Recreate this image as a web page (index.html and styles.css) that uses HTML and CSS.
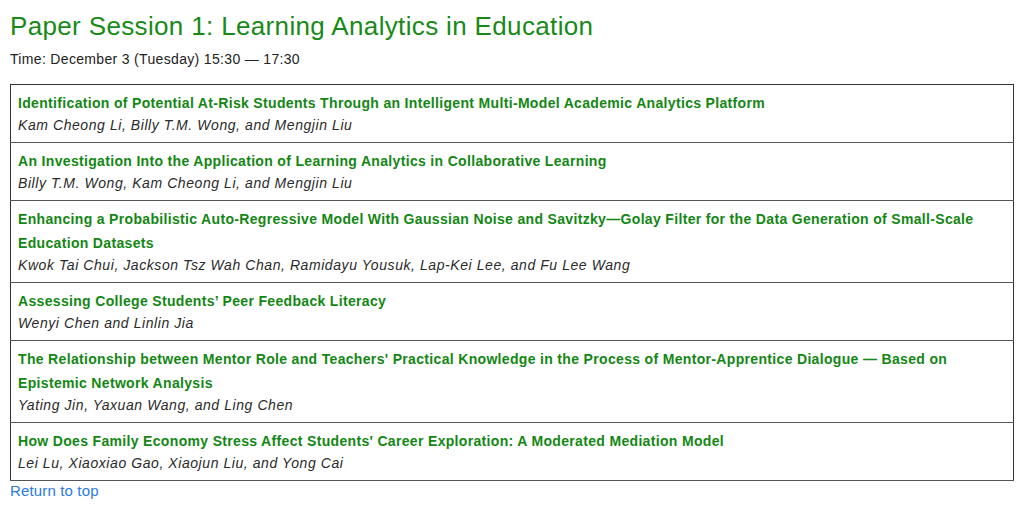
FILE: index.html
```html
<!DOCTYPE html>
<html lang="en">
<head>
<meta charset="utf-8">
<title>Paper Session 1</title>
<link rel="stylesheet" href="styles.css">
</head>
<body>
<main class="page">
  <h2 class="session-title">Paper Session 1: Learning Analytics in Education</h2>
  <p class="session-time">Time: December 3 (Tuesday) 15:30 — 17:30</p>
  <table class="papers">
    <tbody>
      <tr><td>
        <div class="paper-title">Identification of Potential At-Risk Students Through an Intelligent Multi-Model Academic Analytics Platform</div>
        <div class="paper-authors">Kam Cheong Li, Billy T.M. Wong, and Mengjin Liu</div>
      </td></tr>
      <tr><td>
        <div class="paper-title">An Investigation Into the Application of Learning Analytics in Collaborative Learning</div>
        <div class="paper-authors">Billy T.M. Wong, Kam Cheong Li, and Mengjin Liu</div>
      </td></tr>
      <tr><td>
        <div class="paper-title">Enhancing a Probabilistic Auto-Regressive Model With Gaussian Noise and Savitzky—Golay Filter for the Data Generation of Small-Scale Education Datasets</div>
        <div class="paper-authors">Kwok Tai Chui, Jackson Tsz Wah Chan, Ramidayu Yousuk, Lap-Kei Lee, and Fu Lee Wang</div>
      </td></tr>
      <tr><td>
        <div class="paper-title">Assessing College Students’ Peer Feedback Literacy</div>
        <div class="paper-authors">Wenyi Chen and Linlin Jia</div>
      </td></tr>
      <tr><td>
        <div class="paper-title">The Relationship between Mentor Role and Teachers' Practical Knowledge in the Process of Mentor-Apprentice Dialogue — Based on Epistemic Network Analysis</div>
        <div class="paper-authors">Yating Jin, Yaxuan Wang, and Ling Chen</div>
      </td></tr>
      <tr><td>
        <div class="paper-title">How Does Family Economy Stress Affect Students' Career Exploration: A Moderated Mediation Model</div>
        <div class="paper-authors">Lei Lu, Xiaoxiao Gao, Xiaojun Liu, and Yong Cai</div>
      </td></tr>
    </tbody>
  </table>
  <a class="top-link" href="#">Return to top</a>
</main>
</body>
</html>
```

FILE: styles.css
```css
html, body {
  margin: 0;
  padding: 0;
  background: #ffffff;
}

.page {
  padding: 10px 10px 0 10px;
  font-family: "Liberation Sans", Arial, sans-serif;
  color: #222222;
}

.session-title {
  margin: 0;
  font-size: 26px;
  line-height: 32px;
  font-weight: normal;
  letter-spacing: 0.35px;
  color: #178a17;
}

.session-time {
  margin: 8px 0 16px 0;
  font-size: 14px;
  line-height: 18px;
  letter-spacing: 0.33px;
  color: #222222;
}

.papers {
  width: 100%;
  border-collapse: collapse;
  border: 1px solid #333333;
}

.papers td {
  border-bottom: 1px solid #555555;
  padding: 6px 8px 7px 7px;
  vertical-align: top;
}

.paper-title {
  font-size: 14px;
  line-height: 24px;
  font-weight: bold;
  letter-spacing: 0.33px;
  color: #138713;
}

.paper-authors {
  font-size: 14px;
  line-height: 20px;
  font-style: italic;
  letter-spacing: 0.57px;
  color: #2a2a2a;
}

.top-link {
  display: inline-block;
  margin-top: 1px;
  font-size: 15px;
  line-height: 18px;
  letter-spacing: 0.15px;
  color: #2a7ae2;
  text-decoration: none;
}
```
